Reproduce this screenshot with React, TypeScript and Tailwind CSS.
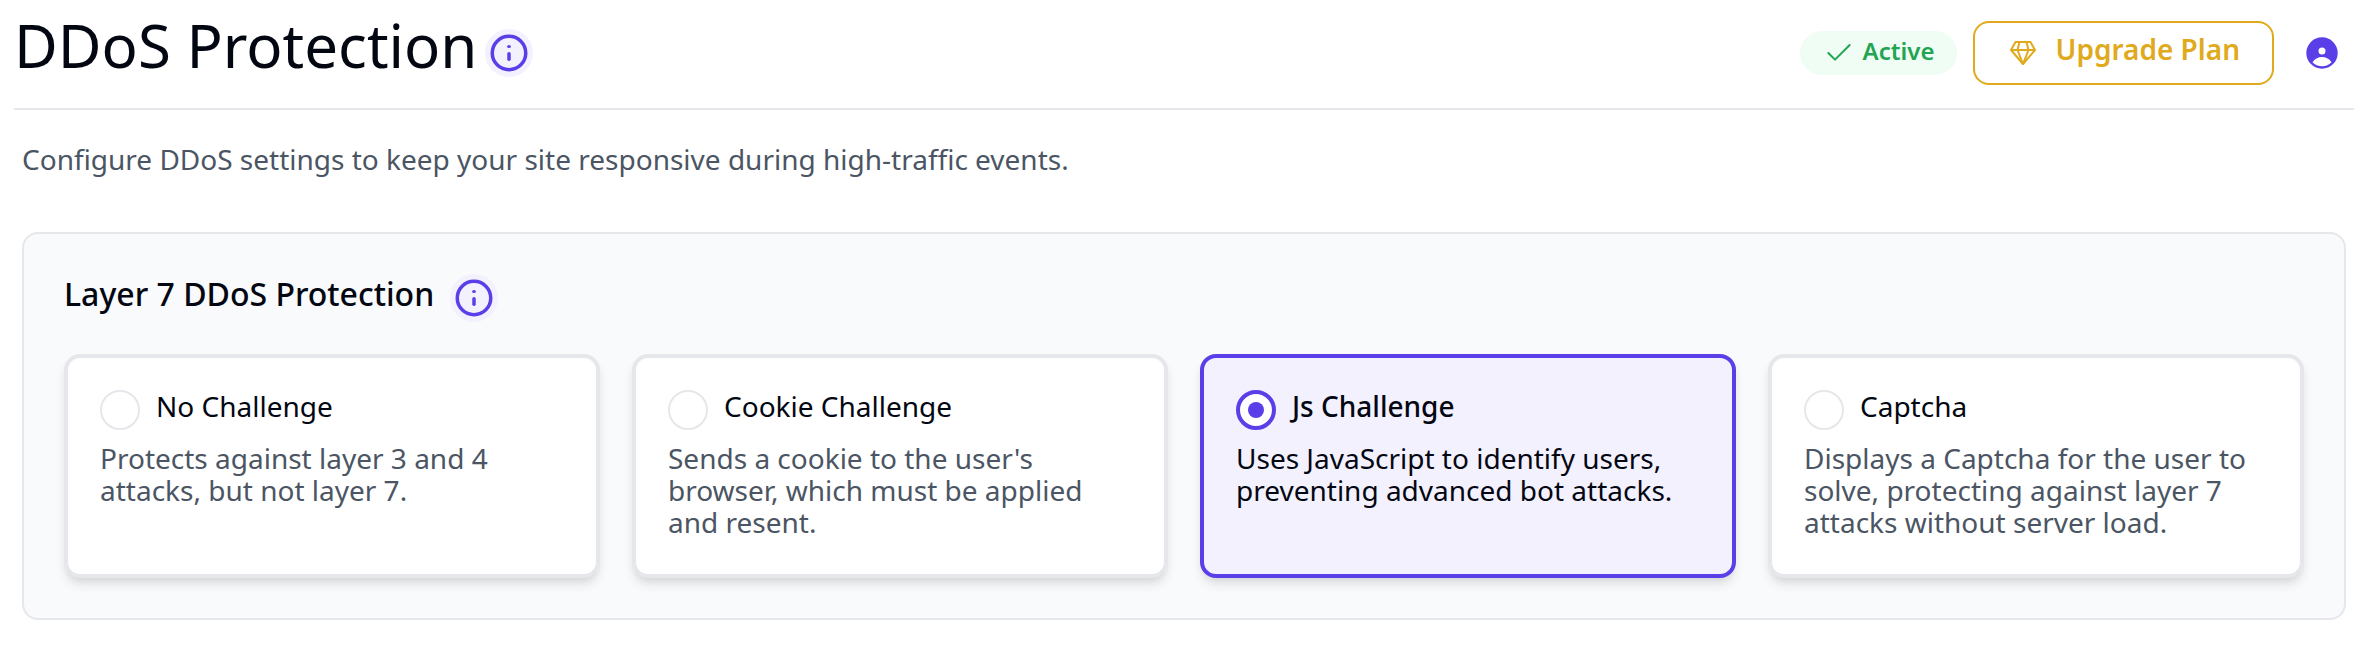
import { clsx } from "clsx";
import { Check } from "lucide-react";
import { useState } from "react";

const challenges = [
    {
        id: "none",
        title: "No Challenge",
        description: "Protects against layer 3 and 4 attacks, but not layer 7.",
    },
    {
        id: "cookie",
        title: "Cookie Challenge",
        description: "Sends a cookie to the user's browser, which must be applied and resent.",
    },
    {
        id: "js",
        title: "Js Challenge",
        description: "Uses JavaScript to identify users, preventing advanced bot attacks.",
    },
    {
        id: "captcha",
        title: "Captcha",
        description: "Displays a Captcha for the user to solve, protecting against layer 7 attacks without server load.",
    },
];

function InfoButton({ label }: { label: string }) {
    return (
        <button type="button" aria-label={label} className="shrink-0 rounded-full bg-[#f4f1ff] p-1 text-[#5a3fe8]">
            <svg className="w-10 h-10" viewBox="0 0 40 40" fill="none" stroke="currentColor" strokeWidth="3.5" strokeLinecap="round" aria-hidden="true">
                <circle cx="20" cy="20" r="16.75" />
                <path d="M20 20.75v5.5" />
                <ellipse cx="20" cy="13.5" rx="1.9" ry="1.6" fill="currentColor" stroke="none" />
            </svg>
        </button>
    );
}

function DiamondIcon() {
    return (
        <svg className="w-8 h-8" viewBox="0 0 32 32" fill="none" stroke="currentColor" strokeWidth="2" strokeLinejoin="round" aria-hidden="true">
            <path d="M8.500 5h15l4.500 8L16 27 4 13z" />
            <path d="M4 13h24M12.500 5L10.500 13 16 27l5.500-14-2-8" />
        </svg>
    );
}

function AccountIcon() {
    return (
        <svg className="w-8 h-8" viewBox="0 0 32 32" aria-hidden="true">
            <circle cx="16" cy="16" r="15.700" fill="#5a3fe8" />
            <circle cx="16" cy="14" r="3.500" fill="#fff" />
            <path d="M6.500 25.300C8.500 22 12 20 16 20s7.500 2 9.500 5.300C23 27.800 19.700 29.300 16 29.300S9 27.800 6.500 25.300z" fill="#fff" />
        </svg>
    );
}

export default function App() {
    const [selected, setSelected] = useState("js");

    return (
        <main className="bg-white pl-3.5 pr-5 font-['Noto_Sans',sans-serif] text-[#030712]">
            <header className="flex items-center justify-between border-b-2 border-[#e5e7eb] pt-[21px] pb-[23px]">
                <div className="flex items-center gap-2">
                    <h1 className="pb-4 text-6xl leading-12">DDoS Protection</h1>
                    <InfoButton label="About DDoS protection" />
                </div>
                <div className="flex items-center gap-4">
                    <span className="flex h-11 items-center gap-2 rounded-full bg-[#f0fdf4] px-[23px] text-2xl font-semibold text-[#22a553]">
                        <Check className="w-8 h-8" strokeWidth={1.5} />
                        <span className="pb-1">Active</span>
                    </span>
                    <button type="button" className="flex h-16 items-center gap-4 rounded-2xl border-2 border-[#e0aa1c] px-8 text-[28px] leading-8 font-semibold text-[#e0aa1c]">
                        <DiamondIcon />
                        <span className="pb-2">Upgrade Plan</span>
                    </button>
                    <button type="button" aria-label="Account" className="px-4">
                        <AccountIcon />
                    </button>
                </div>
            </header>

            <div className="px-2">
                <p className="mt-[29px] text-[28px] leading-10 text-[#4b5563]">
                    Configure DDoS settings to keep your site responsive during high-traffic events.
                </p>

                <section className="mt-[53px] rounded-2xl border-2 border-[#e5e7eb] bg-[#f9fafb] p-10">
                    <div className="flex items-center gap-4">
                        <h2 className="pb-2 text-[32px] leading-10 font-medium">Layer 7 DDoS Protection</h2>
                        <InfoButton label="About layer 7 protection" />
                    </div>

                    <div role="radiogroup" aria-label="Layer 7 DDoS Protection" className="mt-8 grid grid-cols-4 gap-8">
                        {challenges.map((challenge) => {
                            const active = challenge.id === selected;
                            return (
                                <label
                                    key={challenge.id}
                                    className={clsx(
                                        "block cursor-pointer rounded-2xl border-4 px-8 pt-8 pb-9 text-[28px] leading-8 shadow-[0_8px_12px_-2px_rgb(0_0_0/0.1),0_4px_8px_-4px_rgb(0_0_0/0.1)]",
                                        active ? "border-[#5a3fe8] bg-[#f4f1ff]" : "border-[#e5e7eb] bg-white",
                                    )}
                                >
                                    <span className="flex items-start gap-4">
                                        <span className="grid h-10 w-10 shrink-0 place-items-center">
                                            <input
                                                type="radio"
                                                name="challenge"
                                                value={challenge.id}
                                                checked={active}
                                                onChange={() => setSelected(challenge.id)}
                                                className="col-start-1 row-start-1 h-10 w-10 appearance-none rounded-full border-2 border-[#e5e7eb] bg-white checked:border-4 checked:border-[#5a3fe8]"
                                            />
                                            {active && <span className="col-start-1 row-start-1 h-4 w-4 rounded-full bg-[#5a3fe8]" />}
                                        </span>
                                        <span className={active ? "font-medium" : ""}>{challenge.title}</span>
                                    </span>
                                    <span className={clsx("mt-3 block", !active && "text-[#4b5563]")}>
                                        {challenge.description}
                                    </span>
                                </label>
                            );
                        })}
                    </div>
                </section>
            </div>
        </main>
    );
}
